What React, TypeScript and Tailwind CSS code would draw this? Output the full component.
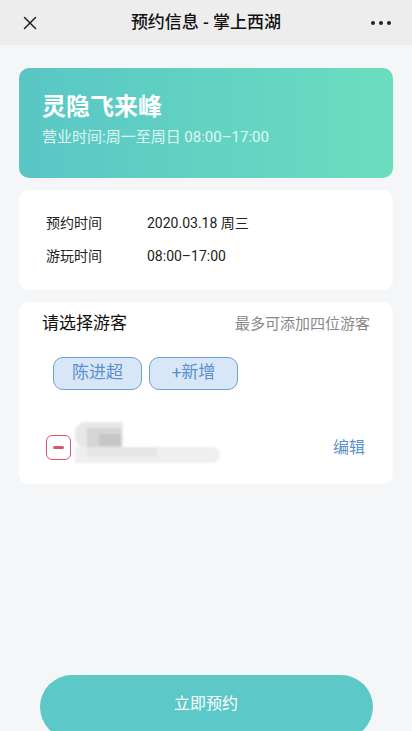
import { X } from 'lucide-react'

const font = { fontFamily: 'Roboto, "Noto Sans CJK SC", "Noto Sans", sans-serif' }

function InfoRow({ label, value }: { label: string; value: string }) {
  return (
    <div className="flex items-center text-[14px] text-[#222]">
      <span className="w-[101px]">{label}</span>
      <span>{value}</span>
    </div>
  )
}

function BlurredName() {
  // pixelated/blurred placeholder for a masked name
  return (
    <div className="relative h-[42px] w-[145px] blur-[1px]">
      <div className="absolute left-[0px] top-[0px] h-[26px] w-[48px] rounded-l-[10px] bg-[#e8e8e8]" />
      <div className="absolute left-[12px] top-[6px] h-[20px] w-[34px] bg-[#d6d6d6]" />
      <div className="absolute left-[24px] top-[12px] h-[12px] w-[22px] bg-[#c6c6c6]" />
      <div className="absolute left-[0px] top-[25px] h-[16px] w-[145px] rounded-r-full bg-[#efefef]" />
      <div className="absolute left-[12px] top-[25px] h-[10px] w-[70px] bg-[#e6e6e6]" />
    </div>
  )
}

export default function App() {
  return (
    <div className="flex h-[731px] w-full flex-col overflow-hidden bg-[#f5f6f8]" style={font}>
      <div className="flex h-[45px] shrink-0 items-center justify-between bg-[#ededed] px-[19px]">
        <X size={22} strokeWidth={1.6} className="text-[#222]" />
        <span className="text-[17px] font-medium text-[#111]">预约信息 - 掌上西湖</span>
        <div className="flex gap-[4px] pr-[2px]">
          <span className="h-[4px] w-[4px] rounded-full bg-[#222]" />
          <span className="h-[4px] w-[4px] rounded-full bg-[#222]" />
          <span className="h-[4px] w-[4px] rounded-full bg-[#222]" />
        </div>
      </div>

      <div className="flex flex-col gap-[12px] px-[19px] pt-[23px]">
        <div className="flex h-[110px] flex-col justify-center rounded-[10px] bg-gradient-to-r from-[#59c6c5] to-[#6bdebf] pb-[8px] pl-[23px]">
          <div className="text-[24px] font-bold leading-[34px] text-white">灵隐飞来峰</div>
          <div className="mt-[2px] text-[15px] text-white/80">营业时间:周一至周日 08:00–17:00</div>
        </div>

        <div className="flex h-[100px] flex-col justify-center gap-[12px] rounded-[10px] bg-white pb-[1px] pl-[27px]">
          <InfoRow label="预约时间" value="2020.03.18 周三" />
          <InfoRow label="游玩时间" value="08:00–17:00" />
        </div>

        <div className="flex h-[182px] flex-col rounded-[10px] bg-white px-[23px] pt-[9px]">
          <div className="flex items-center justify-between">
            <span className="text-[17px] text-[#111]">请选择游客</span>
            <span className="text-[15px] text-[#888]">最多可添加四位游客</span>
          </div>
          <div className="mt-[20px] flex gap-[7px] pl-[11px]">
            <div className="flex h-[33px] w-[89px] items-center justify-center rounded-[10px] border border-[#6f9fd6] bg-[#d7e7f8] text-[17px] text-[#5d8fcb]">
              陈进超
            </div>
            <div className="flex h-[33px] w-[89px] items-center justify-center rounded-[10px] border border-[#6f9fd6] bg-[#d7e7f8] text-[17px] text-[#5d8fcb]">
              +新增
            </div>
          </div>
          <div className="mt-[32px] flex items-center pl-[4px]">
            <div className="mt-[10px] flex h-[25px] w-[25px] items-center justify-center rounded-[6px] border-[1.5px] border-[#d8566e]">
              <span className="h-[3px] w-[11px] rounded-full bg-[#d8566e]" />
            </div>
            <div className="ml-[4px]">
              <BlurredName />
            </div>
            <span className="ml-auto mt-[10px] pr-[5px] text-[16px] text-[#5d8fcb]">编辑</span>
          </div>
        </div>
      </div>

      <div className="mt-auto flex justify-center">
        <button
          type="button"
          className="mb-[-8px] flex h-[64px] w-[333px] items-start justify-center rounded-full bg-[#5dc8c8] pt-[17px] text-[16px] text-white"
        >
          立即预约
        </button>
      </div>
    </div>
  )
}
